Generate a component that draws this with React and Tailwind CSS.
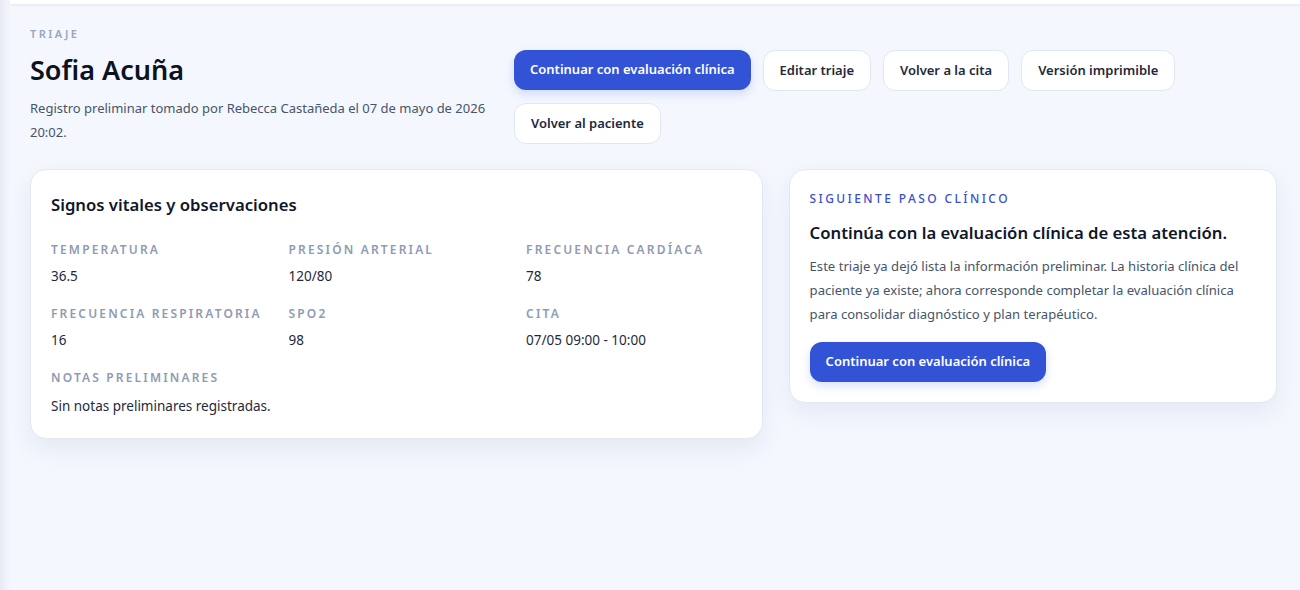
import React from 'react';

const font = { fontFamily: '"Noto Sans", "Open Sans", sans-serif' };

const vitals = [
  ['Temperatura', '36.5'],
  ['Presión arterial', '120/80'],
  ['Frecuencia cardíaca', '78'],
  ['Frecuencia respiratoria', '16'],
  ['SpO2', '98'],
  ['Cita', '07/05 09:00 - 10:00'],
];

function PrimaryBtn({ children }) {
  return (
    <button className="h-10 px-4 rounded-xl bg-[#3353d6] text-white text-[13px] font-semibold shadow-[0_4px_10px_rgba(51,83,214,0.18)] whitespace-nowrap">
      {children}
    </button>
  );
}

function GhostBtn({ children }) {
  return (
    <button className="h-[41px] px-4 rounded-xl bg-white border border-[#e1e6f0] text-[#1e293b] text-[13px] font-semibold whitespace-nowrap">
      {children}
    </button>
  );
}

function Label({ children }) {
  return (
    <div className="text-[12px] leading-4 font-semibold uppercase tracking-[0.18em] text-[#8e9bb2]">{children}</div>
  );
}

export default function App() {
  return (
    <div className="min-h-[590px] flex bg-[#f4f7fe]" style={font}>
      <div className="w-[10px] shrink-0 bg-gradient-to-r from-[#e7eaf3] to-[#f4f7fe]" />
      <div className="flex-1 flex flex-col">
        <div className="h-[4px] bg-white shadow-[0_1px_3px_rgba(15,23,42,0.08)]" />
        <main className="pl-5 pr-[23px] pt-[22px] pb-10">
          <header className="grid grid-cols-[464px_1fr] gap-5">
            <div>
              <div className="text-[11px] leading-4 font-semibold tracking-[0.22em] text-[#9aa5ba]">TRIAJE</div>
              <h1 className="mt-[10px] text-[27px] leading-9 font-semibold text-[#0b1220]">Sofia Acuña</h1>
              <p className="mt-[8px] text-[13px] leading-6 text-[#475569]">
                Registro preliminar tomado por Rebecca Castañeda el 07 de mayo de 2026 20:02.
              </p>
            </div>
            <div className="pt-[24px] flex flex-wrap content-start gap-3">
              <PrimaryBtn>Continuar con evaluación clínica</PrimaryBtn>
              <GhostBtn>Editar triaje</GhostBtn>
              <GhostBtn>Volver a la cita</GhostBtn>
              <GhostBtn>Versión imprimible</GhostBtn>
              <GhostBtn>Volver al paciente</GhostBtn>
            </div>
          </header>

          <section className="mt-[25px] grid grid-cols-[3fr_2fr] gap-[26px] items-start">
            <div className="rounded-2xl bg-white border border-[#e3e8f1] shadow-[0_10px_24px_rgba(30,41,80,0.07)] px-5 pt-[21px] pb-5">
              <h2 className="text-[16.7px] leading-7 font-semibold text-[#0f172a]">Signos vitales y observaciones</h2>
              <div className="mt-[23px] grid grid-cols-3 gap-x-[22px] gap-y-5">
                {vitals.map(([k, v]) => (
                  <div key={k}>
                    <Label>{k}</Label>
                    <div className="mt-2 text-[13.5px] leading-5 text-[#1e293b]">{v}</div>
                  </div>
                ))}
              </div>
              <div className="mt-5">
                <Label>Notas preliminares</Label>
                <p className="mt-2 text-[13.5px] leading-6 text-[#1e293b]">Sin notas preliminares registradas.</p>
              </div>
            </div>

            <div className="rounded-2xl bg-white border border-[#e3e8f1] shadow-[0_10px_24px_rgba(30,41,80,0.07)] px-5 pt-[21px] pb-5">
              <div className="text-[12px] leading-4 font-medium uppercase tracking-[0.2em] text-[#3b4fc9]">Siguiente paso clínico</div>
              <h2 className="mt-[12px] text-[16.7px] leading-7 font-semibold text-[#0f172a]">
                Continúa con la evaluación clínica de esta atención.
              </h2>
              <p className="mt-[7px] text-[13.1px] leading-6 text-[#475569]">
                Este triaje ya dejó lista la información preliminar. La historia clínica del paciente ya existe; ahora corresponde completar la evaluación clínica para consolidar diagnóstico y plan terapéutico.
              </p>
              <div className="mt-[16px]">
                <PrimaryBtn>Continuar con evaluación clínica</PrimaryBtn>
              </div>
            </div>
          </section>
        </main>
      </div>
    </div>
  );
}
